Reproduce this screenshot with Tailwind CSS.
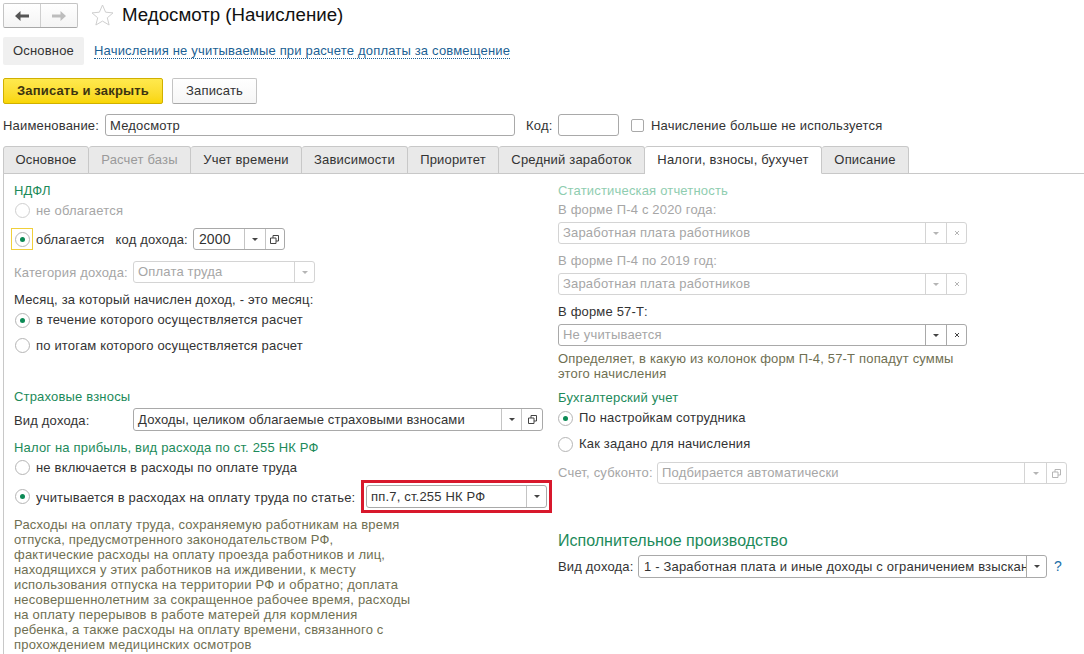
<!DOCTYPE html>
<html lang="ru">
<head>
    <meta charset="UTF-8">
    <title>Медосмотр (Начисление)</title>
    <script src="https://cdn.jsdelivr.net/npm/@tailwindcss/browser@4"></script>
</head>
<body class="bg-white w-[1084px] h-[654px] overflow-hidden font-['Liberation_Sans',Arial,sans-serif] text-[13px] text-[#333] tracking-[0.18px]">

    <!-- header -->
    <div class="flex items-center h-[25px] mt-[3px] ml-[3px]">
        <div class="flex w-[75px] h-[25px] border border-[#c4c4c4] border-b-[#a8a8a8] rounded-[2px] bg-gradient-to-b from-white to-[#f4f4f4]">
            <div class="w-[37px] flex items-center justify-center border-r border-[#cfcfcf]">
                <svg width="14" height="10" viewBox="0 0 14 10"><path d="M0 5 L5.5 0 V3.5 H14 V6.5 H5.5 V10 Z" fill="#555"/></svg>
            </div>
            <div class="flex-1 flex items-center justify-center">
                <svg width="14" height="10" viewBox="0 0 14 10"><path d="M14 5 L8.5 0 V3.5 H0 V6.5 H8.5 V10 Z" fill="#bdbdbd"/></svg>
            </div>
        </div>
        <svg class="ml-[13px] -mt-[1px]" width="23" height="22" viewBox="0 0 23 22"><path d="M11.5 1 L14.6 8.2 L22 8.9 L16.3 13.8 L18.1 21 L11.5 17.1 L4.9 21 L6.7 13.8 L1 8.9 L8.4 8.2 Z" fill="none" stroke="#cfcfcf"/></svg>
        <div class="ml-[8px] text-[18.7px] text-[#111] tracking-normal">Медосмотр (Начисление)</div>
    </div>

    <div class="flex items-center h-[28px] mt-[9px] ml-[3px]">
        <div class="w-[81px] h-[28px] flex items-center justify-center bg-[#f0f0f0] rounded-[2px]">Основное</div>
        <a class="ml-[10px] text-[#1b5f94] border-b border-dotted border-[#1b5f94] leading-[14px]">Начисления не учитываемые при расчете доплаты за совмещение</a>
    </div>

    <div class="flex items-center h-[26px] mt-[13px] ml-[3px]">
        <div class="w-[160px] h-[26px] flex items-center justify-center font-bold text-[#3d3410] rounded-[2px] border border-[#d0b000] bg-gradient-to-b from-[#ffe94d] to-[#f9d600]">Записать и закрыть</div>
        <div class="ml-[9px] w-[85px] h-[26px] flex items-center justify-center rounded-[2px] border border-[#c4c4c4] border-b-[#a8a8a8] bg-gradient-to-b from-white to-[#f6f6f6]">Записать</div>
    </div>

    <div class="flex items-center h-[22px] mt-[10px] ml-[3px]">
        <span class="w-[102px] pt-[2px]">Наименование:</span>
        <div class="w-[410px] h-[22px] px-[4px] pt-[1px] flex items-center border border-[#a9a9a9] rounded-[3px]">Медосмотр</div>
        <span class="ml-[11px] w-[32px] pt-[2px]">Код:</span>
        <div class="w-[61px] h-[22px] border border-[#a9a9a9] rounded-[3px]"></div>
        <div class="ml-[12px] w-[13px] h-[13px] border border-[#a9a9a9] rounded-[2px]"></div>
        <span class="ml-[7px] pt-[2px]">Начисление больше не используется</span>
    </div>

    <!-- tabs -->
    <div class="flex h-[28px] mt-[10px] pl-[3px] relative z-10">
        <div class="w-[86px] flex items-center justify-center bg-[#e9e9e9] border border-[#c8c8c8] rounded-t-[3px]">Основное</div>
        <div class="w-[102px] flex items-center justify-center bg-[#e9e9e9] border border-l-0 border-[#c8c8c8] rounded-t-[3px] text-[#9a9a9a]">Расчет базы</div>
        <div class="w-[111px] flex items-center justify-center bg-[#e9e9e9] border border-l-0 border-[#c8c8c8] rounded-t-[3px]">Учет времени</div>
        <div class="w-[106px] flex items-center justify-center bg-[#e9e9e9] border border-l-0 border-[#c8c8c8] rounded-t-[3px]">Зависимости</div>
        <div class="w-[91px] flex items-center justify-center bg-[#e9e9e9] border border-l-0 border-[#c8c8c8] rounded-t-[3px]">Приоритет</div>
        <div class="w-[146px] flex items-center justify-center bg-[#e9e9e9] border border-l-0 border-[#c8c8c8] rounded-t-[3px]">Средний заработок</div>
        <div class="w-[177px] flex items-center justify-center bg-white border border-l-0 border-b-white border-[#c8c8c8] rounded-t-[3px]">Налоги, взносы, бухучет</div>
        <div class="w-[87px] flex items-center justify-center bg-[#e9e9e9] border border-l-0 border-[#c8c8c8] rounded-t-[3px]">Описание</div>
    </div>

    <!-- panel -->
    <div class="ml-[3px] -mt-[1px] h-[481px] border-l border-t border-[#c8c8c8] grid grid-cols-[553px_1fr]">

        <!-- left column -->
        <div class="pl-[11px] pt-[6px]">
            <div class="h-[20px] -ml-[1px] pt-[2px] flex items-center text-[#1c8a5a]">НДФЛ</div>
            <div class="h-[20px] flex items-center text-[#a6a6a6]">
                <span class="w-[15px] h-[15px] rounded-full border border-[#cfcfcf]"></span>
                <span class="ml-[6px] pt-[2px]">не облагается</span>
            </div>
            <div class="h-[22px] mt-[8px] flex items-center">
                <span class="-ml-[4px] w-[22px] h-[22px] flex items-center justify-center border border-[#f0cf3a]">
                    <span class="w-[15px] h-[15px] rounded-full border border-[#b5b5b5] flex items-center justify-center"><span class="w-[5px] h-[5px] rounded-full bg-[#0c8a55]"></span></span>
                </span>
                <span class="ml-[3px] pt-[2px]">облагается</span>
                <span class="ml-[11px] pt-[2px]">код дохода:</span>
                <div class="ml-[5px] w-[92px] h-[22px] flex border border-[#a9a9a9] rounded-[3px]">
                    <span class="w-[50px] px-[5px] flex items-center text-[14px]">2000</span>
                    <span class="w-[21px] flex items-center justify-center border-l border-[#c4c4c4]"><svg width="6" height="3" viewBox="0 0 6 3"><path d="M0 0H6L3 3Z" fill="#444"/></svg></span>
                    <span class="flex-1 flex items-center justify-center border-l border-[#c4c4c4]"><svg width="9" height="9" viewBox="0 0 9 9"><path d="M3 3V.5H8.5V6H6M.5 3H6V8.5H.5Z" fill="none" stroke="#444"/></svg></span>
                </div>
            </div>
            <div class="h-[22px] mt-[11px] flex items-center text-[#a6a6a6]">
                <span class="w-[119px] -ml-[1px] pt-[2px]">Категория дохода:</span>
                <div class="w-[182px] h-[22px] flex border border-[#d4d4d4] rounded-[3px]">
                    <span class="w-[160px] px-[4px] flex items-center">Оплата труда</span>
                    <span class="flex-1 flex items-center justify-center border-l border-[#d4d4d4]"><svg width="6" height="3" viewBox="0 0 6 3"><path d="M0 0H6L3 3Z" fill="#b5b5b5"/></svg></span>
                </div>
            </div>
            <div class="h-[20px] mt-[6px] -ml-[1px] pt-[2px] flex items-center">Месяц, за который начислен доход, - это месяц:</div>
            <div class="h-[20px] mt-[1px] flex items-center">
                <span class="w-[15px] h-[15px] rounded-full border border-[#b5b5b5] flex items-center justify-center"><span class="w-[5px] h-[5px] rounded-full bg-[#0c8a55]"></span></span>
                <span class="ml-[6px]">в течение которого осуществляется расчет</span>
            </div>
            <div class="h-[20px] mt-[5px] flex items-center">
                <span class="w-[15px] h-[15px] rounded-full border border-[#b5b5b5]"></span>
                <span class="ml-[6px] pt-[2px]">по итогам которого осуществляется расчет</span>
            </div>
            <div class="h-[20px] mt-[31px] -ml-[1px] pt-[2px] flex items-center text-[#1c8a5a]">Страховые взносы</div>
            <div class="h-[23px] mt-[2px] flex items-center">
                <span class="w-[119px] -ml-[1px] pt-[2px]">Вид дохода:</span>
                <div class="w-[410px] h-[23px] flex border border-[#a9a9a9] rounded-[3px]">
                    <span class="w-[367px] px-[4px] pt-[1px] flex items-center">Доходы, целиком облагаемые страховыми взносами</span>
                    <span class="w-[20px] flex items-center justify-center border-l border-[#c4c4c4]"><svg width="6" height="3" viewBox="0 0 6 3"><path d="M0 0H6L3 3Z" fill="#444"/></svg></span>
                    <span class="flex-1 flex items-center justify-center border-l border-[#c4c4c4]"><svg width="9" height="9" viewBox="0 0 9 9"><path d="M3 3V.5H8.5V6H6M.5 3H6V8.5H.5Z" fill="none" stroke="#444"/></svg></span>
                </div>
            </div>
            <div class="h-[20px] mt-[6px] -ml-[1px] pt-[2px] flex items-center text-[#1c8a5a]">Налог на прибыль, вид расхода по ст. 255 НК РФ</div>
            <div class="h-[20px] flex items-center">
                <span class="w-[15px] h-[15px] rounded-full border border-[#b5b5b5]"></span>
                <span class="ml-[6px] pt-[2px]">не включается в расходы по оплате труда</span>
            </div>
            <div class="h-[33px] mt-[3px] flex items-center">
                <span class="w-[15px] h-[15px] rounded-full border border-[#b5b5b5] flex items-center justify-center"><span class="w-[5px] h-[5px] rounded-full bg-[#0c8a55]"></span></span>
                <span class="ml-[6px] w-[325px] pt-[2px]">учитывается в расходах на оплату труда по статье:</span>
                <div class="w-[191px] h-[33px] border-[3px] border-[#d8182c] p-[2px]">
                    <div class="w-full h-full flex border border-[#a9a9a9] rounded-[3px]">
                        <span class="flex-1 px-[4px] flex items-center">пп.7, ст.255 НК РФ</span>
                        <span class="w-[20px] flex items-center justify-center border-l border-[#c4c4c4]"><svg width="6" height="3" viewBox="0 0 6 3"><path d="M0 0H6L3 3Z" fill="#444"/></svg></span>
                    </div>
                </div>
            </div>
            <p class="mt-[4px] -ml-[1px] whitespace-nowrap leading-[15px] text-[#6f6f52]">Расходы на оплату труда, сохраняемую работникам на время<br>отпуска, предусмотренного законодательством РФ,<br>фактические расходы на оплату проезда работников и лиц,<br>находящихся у этих работников на иждивении, к месту<br>использования отпуска на территории РФ и обратно; доплата<br>несовершеннолетним за сокращенное рабочее время, расходы<br>на оплату перерывов в работе матерей для кормления<br>ребенка, а также расходы на оплату времени, связанного с<br>прохождением медицинских осмотров</p>
        </div>

        <!-- right column -->
        <div class="pt-[6px] pl-[1px]">
            <div class="h-[20px] pt-[2px] flex items-center text-[#8fcdb0]">Статистическая отчетность</div>
            <div class="h-[20px] flex items-center text-[#a6a6a6]">В форме П-4 с 2020 года:</div>
            <div class="mt-[2px] w-[409px] h-[22px] flex border border-[#d4d4d4] rounded-[3px] text-[#a6a6a6]">
                <span class="w-[366px] px-[4px] flex items-center">Заработная плата работников</span>
                <span class="w-[21px] flex items-center justify-center border-l border-[#d4d4d4]"><svg width="6" height="3" viewBox="0 0 6 3"><path d="M0 0H6L3 3Z" fill="#b5b5b5"/></svg></span>
                <span class="flex-1 flex items-center justify-center border-l border-[#d4d4d4]"><svg width="6" height="6" viewBox="0 0 6 6"><path d="M1 1L5 5M5 1L1 5" stroke="#b5b5b5"/></svg></span>
            </div>
            <div class="h-[20px] mt-[7px] flex items-center text-[#a6a6a6]">В форме П-4 по 2019 год:</div>
            <div class="mt-[2px] w-[409px] h-[22px] flex border border-[#d4d4d4] rounded-[3px] text-[#a6a6a6]">
                <span class="w-[366px] px-[4px] flex items-center">Заработная плата работников</span>
                <span class="w-[21px] flex items-center justify-center border-l border-[#d4d4d4]"><svg width="6" height="3" viewBox="0 0 6 3"><path d="M0 0H6L3 3Z" fill="#b5b5b5"/></svg></span>
                <span class="flex-1 flex items-center justify-center border-l border-[#d4d4d4]"><svg width="6" height="6" viewBox="0 0 6 6"><path d="M1 1L5 5M5 1L1 5" stroke="#b5b5b5"/></svg></span>
            </div>
            <div class="h-[20px] mt-[7px] flex items-center">В форме 57-Т:</div>
            <div class="mt-[2px] w-[409px] h-[22px] flex border border-[#a9a9a9] rounded-[3px]">
                <span class="w-[366px] px-[4px] flex items-center text-[#a6a6a6]">Не учитывается</span>
                <span class="w-[21px] flex items-center justify-center border-l border-[#a9a9a9]"><svg width="6" height="3" viewBox="0 0 6 3"><path d="M0 0H6L3 3Z" fill="#444"/></svg></span>
                <span class="flex-1 flex items-center justify-center border-l border-[#a9a9a9]"><svg width="6" height="6" viewBox="0 0 6 6"><path d="M1 1L5 5M5 1L1 5" stroke="#444"/></svg></span>
            </div>
            <p class="mt-[5px] whitespace-nowrap leading-[15px] text-[#6f6f52]">Определяет, в какую из колонок форм П-4, 57-Т попадут суммы<br>этого начисления</p>
            <div class="h-[20px] mt-[7px] flex items-center text-[#1c8a5a]">Бухгалтерский учет</div>
            <div class="h-[20px] flex items-center">
                <span class="w-[15px] h-[15px] rounded-full border border-[#b5b5b5] flex items-center justify-center"><span class="w-[5px] h-[5px] rounded-full bg-[#0c8a55]"></span></span>
                <span class="ml-[6px]">По настройкам сотрудника</span>
            </div>
            <div class="h-[20px] mt-[6px] flex items-center">
                <span class="w-[15px] h-[15px] rounded-full border border-[#b5b5b5]"></span>
                <span class="ml-[6px]">Как задано для начисления</span>
            </div>
            <div class="h-[22px] mt-[8px] flex items-center text-[#a6a6a6]">
                <span class="w-[99px]">Счет, субконто:</span>
                <div class="w-[410px] h-[22px] flex border border-[#d4d4d4] rounded-[3px]">
                    <span class="w-[366px] px-[4px] flex items-center">Подбирается автоматически</span>
                    <span class="w-[22px] flex items-center justify-center border-l border-[#d4d4d4]"><svg width="6" height="3" viewBox="0 0 6 3"><path d="M0 0H6L3 3Z" fill="#b5b5b5"/></svg></span>
                    <span class="flex-1 flex items-center justify-center border-l border-[#d4d4d4]"><svg width="9" height="9" viewBox="0 0 9 9"><path d="M3 3V.5H8.5V6H6M.5 3H6V8.5H.5Z" fill="none" stroke="#b5b5b5"/></svg></span>
                </div>
            </div>
            <div class="h-[20px] mt-[47px] flex items-center text-[16px] tracking-normal text-[#1c8a5a]">Исполнительное производство</div>
            <div class="h-[23px] mt-[4px] flex items-center">
                <span class="w-[80px]">Вид дохода:</span>
                <div class="w-[409px] h-[23px] flex border border-[#a9a9a9] rounded-[3px]">
                    <span class="w-[387px] pl-[5px] pr-[4px] flex items-center overflow-hidden whitespace-nowrap">1 - Заработная плата и иные доходы с ограничением взыскания</span>
                    <span class="flex-1 flex items-center justify-center border-l border-[#a9a9a9]"><svg width="6" height="3" viewBox="0 0 6 3"><path d="M0 0H6L3 3Z" fill="#444"/></svg></span>
                </div>
                <span class="ml-[7px] text-[14px] text-[#1b6fa8]">?</span>
            </div>
        </div>
    </div>

</body>
</html>
